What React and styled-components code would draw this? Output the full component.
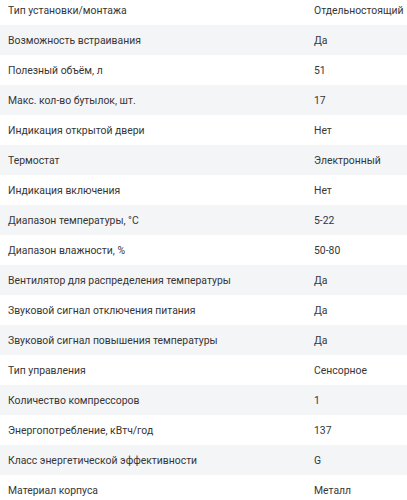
import React from "react";
import styled, { createGlobalStyle } from "styled-components";

const Global = createGlobalStyle`
    body {
        margin: 0;
        background: #fff;
        font-family: Roboto, "Noto Sans", sans-serif;
    }
`;

const Table = styled.div`
    margin-top: -5px;
    display: flex;
    flex-direction: column;
`;

const Row = styled.div`
    display: grid;
    grid-template-columns: 314px 1fr;
    align-items: center;
    height: 30px;
    background: ${p => (p.$shaded ? "#f4f5f7" : "#fff")};
    color: #363636;
    font-size: 10.4px;
`;

const Label = styled.span`
    padding-left: 8px;
    white-space: nowrap;
`;

const Value = styled.span`
    white-space: nowrap;
`;

const specs = [
    ["Тип установки/монтажа", "Отдельностоящий"],
    ["Возможность встраивания", "Да"],
    ["Полезный объём, л", "51"],
    ["Макс. кол-во бутылок, шт.", "17"],
    ["Индикация открытой двери", "Нет"],
    ["Термостат", "Электронный"],
    ["Индикация включения", "Нет"],
    ["Диапазон температуры, °С", "5-22"],
    ["Диапазон влажности, %", "50-80"],
    ["Вентилятор для распределения температуры", "Да"],
    ["Звуковой сигнал отключения питания", "Да"],
    ["Звуковой сигнал повышения температуры", "Да"],
    ["Тип управления", "Сенсорное"],
    ["Количество компрессоров", "1"],
    ["Энергопотребление, кВтч/год", "137"],
    ["Класс энергетической эффективности", "G"],
    ["Материал корпуса", "Металл"]
];

export default function App() {
    return (
        <>
            <Global />
            <Table>
                {specs.map(([label, value], i) => (
                    <Row key={label} $shaded={i % 2 === 1}>
                        <Label>{label}</Label>
                        <Value>{value}</Value>
                    </Row>
                ))}
            </Table>
        </>
    );
}
